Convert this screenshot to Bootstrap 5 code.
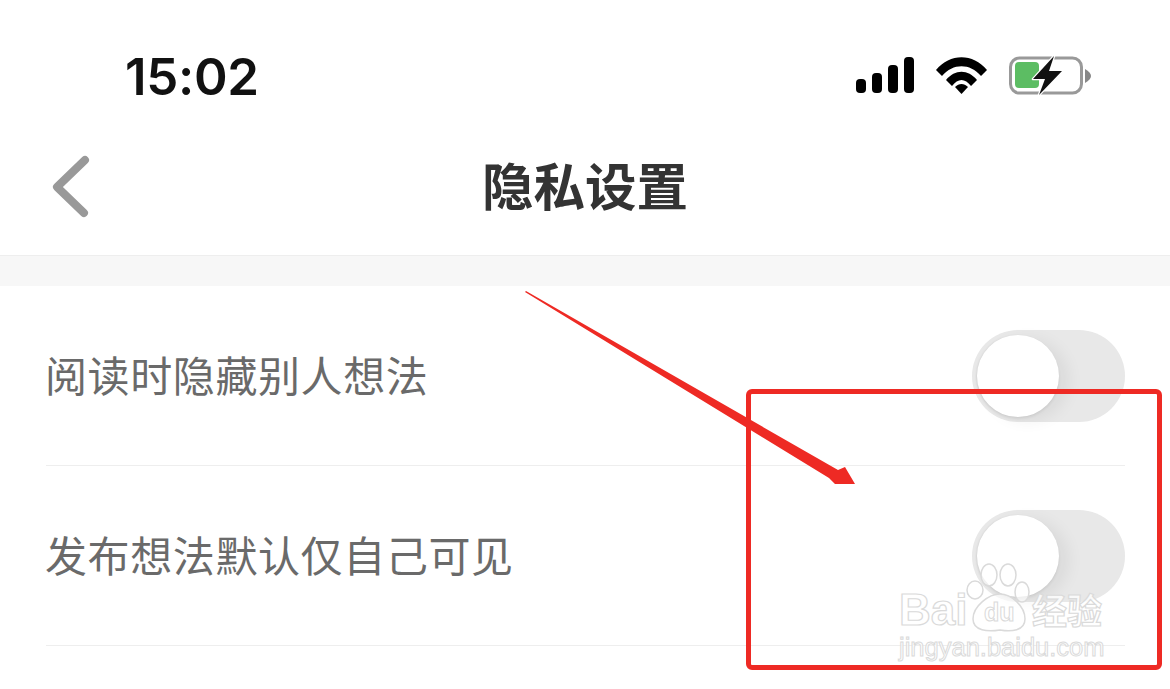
<!DOCTYPE html>
<html lang="zh">
<head>
<meta charset="utf-8">
<title>隐私设置</title>
<link href="https://cdn.jsdelivr.net/npm/bootstrap@5.3.0/dist/css/bootstrap.min.css" rel="stylesheet">
<style>
html,body{height:689px;overflow:hidden;background:#fff}
body{font-family:"Noto Sans CJK SC","Liberation Sans",sans-serif}
.screen{position:relative;width:1170px;height:689px;overflow:hidden}
.status-bar{height:130px;padding:22px 79px 0 125px}
.clock{font-family:Inter,"Liberation Sans",sans-serif;font-weight:600;font-size:51px;line-height:1;color:#111;letter-spacing:-.3px}
.title-bar{height:125px;padding-bottom:17px;position:relative}
.page-title{font-size:51.500px;font-weight:700;color:#333;line-height:1;margin:0}
.back-link{position:absolute;left:51px;top:24px;line-height:0}
.gap-band{height:31px;background:#f7f7f7;border-top:1px solid #eee}
.setting-row{height:180px;margin:0 45px 0 46px;border-bottom:1px solid #eeeeee}
.setting-label{font-size:42px;letter-spacing:.6px;color:#6a6a6a;line-height:1;padding-bottom:4px;margin-left:-1px}
.toggle-track{width:153px;height:92px;border-radius:46px;background:#e8e8e8;position:relative;flex:none}
.toggle-knob{position:absolute;left:5px;top:5px;width:82px;height:82px;border-radius:50%;background:#fff;box-shadow:10px 4px 16px rgba(0,0,0,.06),0 2px 3px rgba(0,0,0,.07),-1px 0 2px rgba(0,0,0,.05)}
.overlay-art{position:absolute;left:0;top:0;pointer-events:none}
.mark-box{position:absolute;left:746px;top:389px;width:416px;height:281px;border:5px solid #ee2a24;border-radius:6px;pointer-events:none}
.wm-text{position:absolute;font-family:"Liberation Sans",sans-serif;color:rgba(255,255,255,.8);-webkit-text-stroke:1.200px #dadada;line-height:1;white-space:nowrap}
.wm-bai{left:899px;top:588px;font-size:44px;font-weight:700}
.wm-du{left:984px;top:600px;font-size:25px;font-weight:700;-webkit-text-stroke-width:1px}
.wm-jy{left:1032px;top:591px;font-size:35px;font-family:"Noto Sans CJK SC",sans-serif;font-weight:700}
.wm-url{left:899px;top:635px;font-size:25.500px;-webkit-text-stroke-width:1px}
</style>
</head>
<body>
<div class="screen">
  <div class="status-bar d-flex align-items-center justify-content-between">
    <div class="clock">15:02</div>
    <svg width="235" height="42" viewBox="856 55 235 42" aria-hidden="true">
      <g fill="#000">
        <rect x="856" y="79" width="10" height="14" rx="4"/>
        <rect x="872" y="73" width="10" height="20" rx="4"/>
        <rect x="888" y="65" width="10" height="28" rx="4"/>
        <rect x="904" y="57" width="10" height="36" rx="4"/>
        <path d="M936 70 C950 53 973 53 987 70 L981 76 C970 63 953 63 942 76Z"/>
        <path d="M946 80 C955 69 968 69 977 80 L971 86 C965 78 958 78 952 86Z"/>
        <path d="M955 87 C959 83 964 83 968 87 L961.500 94Z"/>
      </g>
      <rect x="1010.500" y="58" width="71" height="35" rx="9" fill="none" stroke="#999" stroke-width="3"/>
      <rect x="1015" y="62" width="24" height="26" rx="4" fill="#5cbd63"/>
      <path d="M1085 69 C1089 71 1091 74 1091 76 C1091 78 1089 81 1085 83Z" fill="#888"/>
      <path d="M1054 56 L1033 79 L1045 79 L1039 95 L1062 71 L1049 71Z" fill="#111" stroke="#fff" stroke-width="2.500" stroke-linejoin="round" paint-order="stroke"/>
    </svg>
  </div>
  <div class="title-bar d-flex align-items-center justify-content-center">
    <a class="back-link" href="#" aria-label="返回">
      <svg width="44" height="66" viewBox="0 0 44 66"><path d="M34 6 L6 33 L33 59" fill="none" stroke="#999" stroke-width="8" stroke-linecap="round" stroke-linejoin="round"/></svg>
    </a>
    <h1 class="page-title">隐私设置</h1>
  </div>
  <div class="gap-band"></div>
  <div class="setting-row d-flex align-items-center justify-content-between">
    <span class="setting-label">阅读时隐藏别人想法</span>
    <span class="toggle-track"><span class="toggle-knob"></span></span>
  </div>
  <div class="setting-row d-flex align-items-center justify-content-between">
    <span class="setting-label">发布想法默认仅自己可见</span>
    <span class="toggle-track"><span class="toggle-knob"></span></span>
  </div>
  <svg class="overlay-art" width="1170" height="689" viewBox="0 0 1170 689" aria-hidden="true">
    <path d="M525 292 L526 291 L838 470 L845 467 L855 484 L835 484 L829 478Z" fill="#ee2a24"/>
    <g fill="rgba(255,255,255,.65)" stroke="#dadada" stroke-width="1.500">
      <ellipse cx="989" cy="575" rx="8" ry="11"/>
      <ellipse cx="1008" cy="575" rx="8" ry="11"/>
      <ellipse cx="975" cy="590" rx="8" ry="9"/>
      <ellipse cx="1022" cy="592" rx="7" ry="10"/>
      <path d="M1000 594 C1011 594 1025 606 1025 619 C1025 631 1011 632 1000 630 C988 632 973 631 973 619 C973 606 989 594 1000 594Z"/>
    </g>
  </svg>
  <div class="mark-box"></div>
  <span class="wm-text wm-bai">Bai</span>
  <span class="wm-text wm-du">du</span>
  <span class="wm-text wm-jy">经验</span>
  <span class="wm-text wm-url">jingyan.baidu.com</span>
</div>
<script src="https://cdn.jsdelivr.net/npm/bootstrap@5.3.0/dist/js/bootstrap.bundle.min.js"></script>
</body>
</html>
